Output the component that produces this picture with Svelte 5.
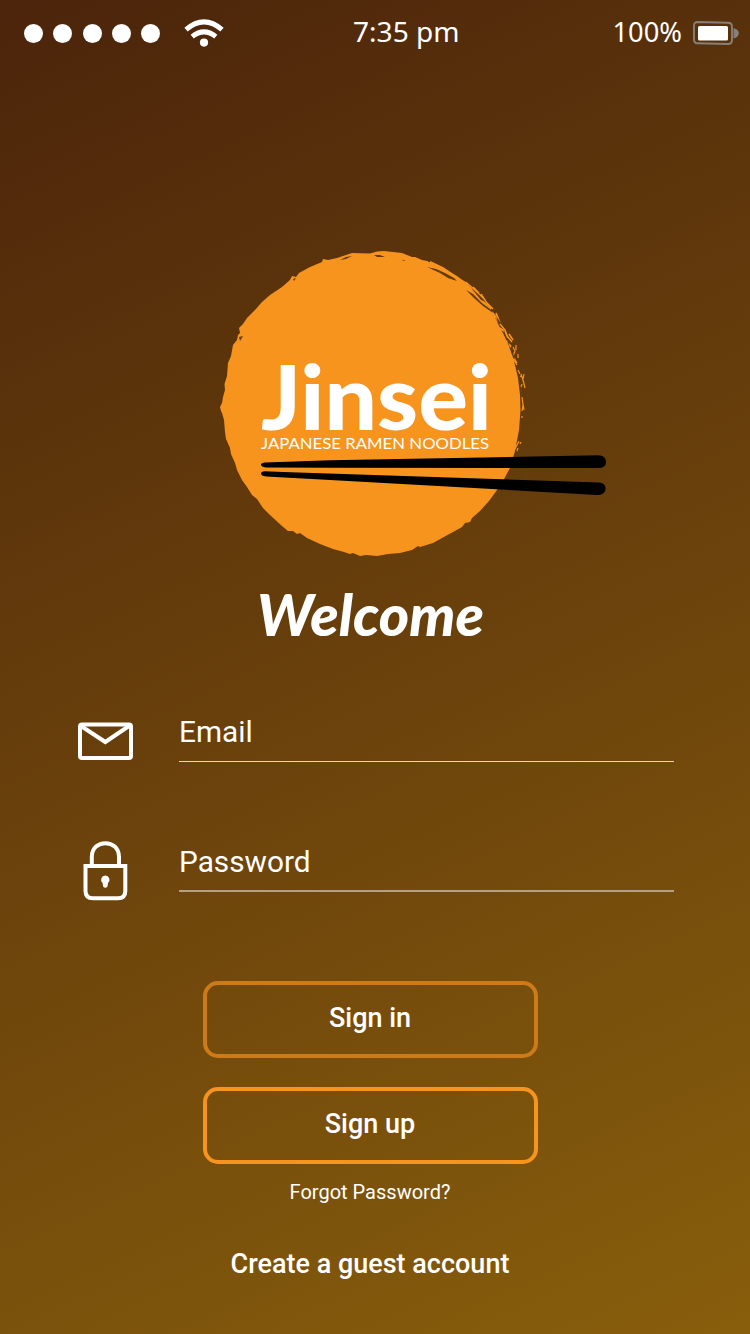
<script>
  const signalDots = [0, 1, 2, 3, 4];
</script>

<main class="screen">
  <header class="status">
    <div class="signal">
      {#each signalDots as dot (dot)}
        <span class="dot"></span>
      {/each}
      <svg class="wifi" width="42" height="30" viewBox="0 0 42 30" aria-hidden="true">
        <path d="M3 11.600Q21-3.800 39 11.600" fill="none" stroke="#fff" stroke-width="5" />
        <path d="M9.200 18.600Q21 9 32.800 18.600" fill="none" stroke="#fff" stroke-width="5" />
        <circle cx="21" cy="24.600" r="4.100" fill="#fff" />
      </svg>
    </div>
    <time class="time">7:35 pm</time>
    <div class="power">
      <span class="percent">100%</span>
      <svg width="48" height="26" viewBox="0 0 48 26" aria-hidden="true">
        <path d="M5.500 2 36 2.700Q40 2.800 40 6.500V20Q40 24 36 24L5.500 23.300Q2 23.200 2 19.500V5.500Q2 2 5.500 2Z" fill="none" stroke="#85807a" stroke-width="1.900" />
        <rect x="6" y="6" width="30" height="14.500" rx="1.500" fill="#fff" />
        <path d="M41.500 8Q46.800 9.500 46.800 13.300T41.500 18.600Z" fill="#85807a" />
      </svg>
    </div>
  </header>

  <svg class="logo" width="410" height="320" viewBox="210 240 410 320" role="img" aria-label="Jinsei Japanese Ramen Noodles">
    <path
      class="sun"
      d="M220 407 222 403 223 397 225 390 224.500 384 227 376 228 363 231 356 233 345 237 340 238 335 240 333 239 328 243 324 247 318 255 310 262 302 270 295 282 287 290 280 292 276 296 277 299 273 310 267 322 262 323 259 328 260 337 258 352 253 370 253.500 377 251.500 384 251 393 252 402 253 412 257 415 257 422 260 427 261 433 264 441 267 450 272 457 276 465 282 475 291 481 297 488 306 493 314 498 324 503 333 509 346 514 361 518 378 520 395 520.500 410 519 430 515 451 510 468 503 481 497 490 489 501 480 511 472 518 470 522 465 523 462 527 453 532 442 538 433 543 420 547 418 546 412 550 400 553 388 554 377 556 366 555 360 556 353 553 350 554 344 552 333 549 320 544 307 538 300 533 297 534 293 531 288 531 282 526 270 515 263 508 257 499 252 495 247 487 242 480 237 470 235 463 231 454 230 448 226 439 225 432 224 420 222 413 221 411Z"
    />
    <g class="flecks">
      <path d="M430 262 443 268 453 275 462 283" stroke-width="2" />
      <path d="M461 280 468 284 475 290 484 299 491 309" stroke-width="1.400" />
      <path d="M463 284 474 293 480 300 490 310" stroke-width="3" />
      <path d="M466 282 469 286M473 287 479 293M481 294 486 302M487 303 493 309" stroke-width="1.500" />
      <path d="M492 312 498 320 500 325M496 313 500 323M493 316 497 323" stroke-width="1.800" />
      <path d="M500 324 505 330 507 336 512 342" stroke-width="1.500" />
      <path d="M500 328 504 331M505 331 508 338M507 340 511 347M509 334 513 340" stroke-width="1.600" />
      <path d="M513 347 515 351 513 356 517 363M512 357 517 365M516 345 516 350M518 354 518 358" stroke-width="1.200" />
      <path d="M521 374 523 380 525 388M524 374 523 379M520 376 522 377M522 384 521 387M518 370 520 374" stroke-width="1.200" />
      <path d="M522 397 523 405 522 411M523 404 524 410M522 416 522 418" stroke-width="1.200" />
      <path d="M519 441 515 449M521 442 520 444M518 448 517 451" stroke-width="1.200" />
    </g>
    <g class="gaps">
      <path d="M340 260 346 257 352 256 346 259Z" />
      <path d="M374 255 380 255 385 257 377 257Z" />
      <path d="M402 260h3l-1 1ZM293 279 296 278 294 281ZM239 337 243 336 240 341Z" />
      <path d="M427 267 436 269 445 273 454 278 457 281 448 278 440 273Z" />
      <path d="M466 290 473 294 482 303 490 309 493 313 483 306 474 298Z" />
      <path d="M471 288 479 295 486 302 481 300ZM496 316 501 323 499 325ZM505 335 510 343 509 345ZM512 350 515 359 513 358Z" />
    </g>
    <text class="brand" x="261" y="430" textLength="231" lengthAdjust="spacingAndGlyphs">Jinsei</text>
    <text class="tagline" x="261" y="449" textLength="228" lengthAdjust="spacingAndGlyphs">JAPANESE RAMEN NOODLES</text>
    <path d="M265 462.500 330 460.300 598 455.300C603 455.200 606 458 606 462S603 468 598 468L330 467.800 266 467.500C259.500 467 259.500 463 265 462.500Z" />
    <path d="M265 471.200 283 472 599 482.500C603 482.700 606 485 605.500 489S602 495 597 495L330 480 266 476.400C259.500 476 259.500 471 265 471.200Z" />
  </svg>

  <svg class="welcome" width="250" height="84" viewBox="0 -10 250 84" role="img" aria-label="Welcome">
    <text x="11" y="49" textLength="227" lengthAdjust="spacingAndGlyphs">Welcome</text>
  </svg>

  <form class="fields" onsubmit={(event) => event.preventDefault()}>
    <div class="field">
      <svg width="56" height="40" viewBox="0 0 56 40" aria-hidden="true">
        <rect x="3" y="3.500" width="51" height="33.500" rx="2" fill="none" stroke="#fff" stroke-width="4" />
        <path d="M4 5 28.300 21 52 5" fill="none" stroke="#fff" stroke-width="4" />
      </svg>
      <span class="label">Email</span>
    </div>
    <div class="field">
      <svg width="56" height="62" viewBox="0 0 56 62" aria-hidden="true">
        <path d="M14.800 27V18C14.800-.5 42 -.5 42 18V27" fill="none" stroke="#fff" stroke-width="4" />
        <path d="M8.500 27H48.300V52Q48.300 59.300 41 59.300H16Q8.500 59.300 8.500 52Z" fill="none" stroke="#fff" stroke-width="4" />
        <path d="M28.300 36.500A4.200 4.200 0 0 1 31 43.900L30.500 47.500Q28.300 50 26.100 47.500L25.600 43.900A4.200 4.200 0 0 1 28.300 36.500Z" fill="#fff" />
      </svg>
      <span class="label soft">Password</span>
    </div>
    <button class="action dim" type="button">Sign in</button>
    <button class="action" type="button">Sign up</button>
    <span class="forgot">Forgot Password?</span>
    <span class="guest">Create a guest account</span>
  </form>
</main>

<style>
  :global(body) {
    margin: 0;
  }

  .screen {
    box-sizing: border-box;
    width: 750px;
    height: 1334px;
    overflow: hidden;
    display: flex;
    flex-direction: column;
    color: #fff;
    font-family: Roboto, sans-serif;
    background: linear-gradient(155deg, #4b240b 0%, #885e0c 100%);
  }

  .status {
    display: grid;
    grid-template-columns: 329px auto 1fr;
    align-items: center;
    height: 66px;
    padding: 0 10px 0 24px;
    font-family: "Noto Sans", "Open Sans", sans-serif;
  }

  .signal {
    display: flex;
    align-items: center;
    gap: 10.300px;
  }

  .dot {
    width: 19px;
    height: 19px;
    border-radius: 50%;
    background: #fff;
  }

  .wifi {
    margin-left: 12.500px;
  }

  .time {
    font-size: 28.100px;
    line-height: 40px;
    margin-bottom: 4px;
    white-space: nowrap;
  }

  .power {
    display: flex;
    justify-content: flex-end;
    align-items: center;
    gap: 10px;
  }

  .percent {
    font-size: 27.300px;
    line-height: 40px;
    margin-bottom: 3px;
  }

  .logo {
    display: block;
    flex: none;
    margin: 174px 0 0 210px;
  }

  .sun {
    fill: #f7941e;
  }

  .flecks {
    fill: none;
    stroke: #f7941e;
  }

  .gaps {
    fill: #633b0c;
  }

  .brand {
    fill: #fff;
    font: 900 90px Lato, sans-serif;
  }

  .tagline {
    fill: #fff;
    font: 400 16px Lato, sans-serif;
  }

  .welcome {
    display: block;
    flex: none;
    margin: 17px 0 0 246px;
  }

  .welcome text {
    fill: #fff;
    font: italic 900 58px Lato, sans-serif;
  }

  .fields {
    display: flex;
    flex-direction: column;
    align-items: center;
    margin-top: 39px;
  }

  .field {
    box-sizing: border-box;
    width: 100%;
    height: 130px;
    padding: 0 76px 0 77px;
    display: grid;
    grid-template-columns: 56px 495px;
    column-gap: 46px;
    align-items: start;
  }

  .field:first-child svg {
    margin-top: 21px;
  }

  .field:nth-child(2) svg {
    margin-top: 9px;
  }

  .label {
    box-sizing: border-box;
    height: 62px;
    padding-top: 12px;
    border-bottom: 1px solid #e0d6c9;
    font-size: 29.800px;
    font-weight: 400;
    line-height: 40px;
  }

  .soft {
    border-bottom: 2px solid #b3a086;
  }

  .action {
    box-sizing: border-box;
    width: 335px;
    height: 77px;
    margin: 21px 0 0 -10px;
    padding: 0 0 4px;
    border: 4px solid #f7941e;
    border-radius: 15px;
    background: none;
    color: #fff;
    font: 500 27px/32px Roboto, sans-serif;
  }

  .action + .action {
    margin-top: 29px;
  }

  .dim {
    border-color: #cd7b19;
  }

  .forgot {
    margin: 16px 0 0 -10px;
    font-size: 20px;
    line-height: 24px;
  }

  .guest {
    margin: 44px 0 0 -10px;
    font-size: 27px;
    font-weight: 500;
    line-height: 32px;
  }
</style>
